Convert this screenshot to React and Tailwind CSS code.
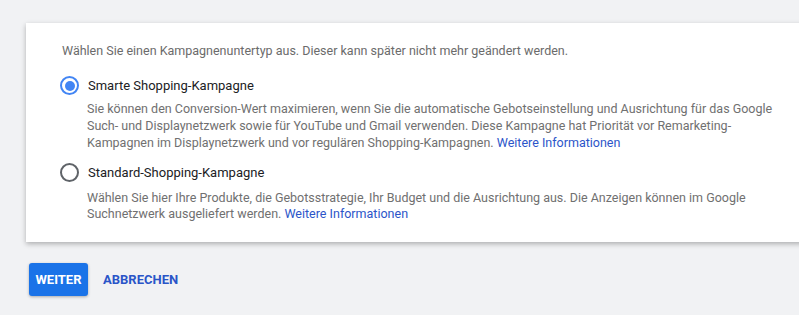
import React, { useState } from 'react';

const options = [
  {
    id: 'smart',
    label: 'Smarte Shopping-Kampagne',
    text: 'Sie können den Conversion-Wert maximieren, wenn Sie die automatische Gebotseinstellung und Ausrichtung für das Google Such- und Displaynetzwerk sowie für YouTube und Gmail verwenden. Diese Kampagne hat Priorität vor Remarketing-Kampagnen im Displaynetzwerk und vor regulären Shopping-Kampagnen.',
  },
  {
    id: 'standard',
    label: 'Standard-Shopping-Kampagne',
    text: 'Wählen Sie hier Ihre Produkte, die Gebotsstrategie, Ihr Budget und die Ausrichtung aus. Die Anzeigen können im Google Suchnetzwerk ausgeliefert werden.',
  },
];

function Radio({ checked }) {
  return (
    <span className={`flex h-[19px] w-[19px] shrink-0 items-center justify-center rounded-full border-2 ${checked ? 'border-[#4285f4]' : 'border-[#5f6368]'}`}>
      {checked && <span className="h-[10px] w-[10px] rounded-full bg-[#4285f4]" />}
    </span>
  );
}

export default function App() {
  const [selected, setSelected] = useState('smart');

  return (
    <div className="min-h-[315px] overflow-hidden bg-[#f1f2f4] pt-[23px] text-[12.5px] leading-[17px] text-[#616161]" style={{ fontFamily: 'Roboto, "Liberation Sans", sans-serif' }}>
      <section className="ml-[26px] mr-[-20px] bg-white pb-[20px] pl-[36px] pr-[40px] pt-[19px] shadow-[0_2px_5px_rgba(0,0,0,0.28)]">
        <p className="text-[#6b6b6b]">Wählen Sie einen Kampagnenuntertyp aus. Dieser kann später nicht mehr geändert werden.</p>

        <div className="mt-[17px] flex flex-col gap-[12px]">
          {options.map((o, i) => (
            <div key={o.id} className="cursor-pointer" onClick={() => setSelected(o.id)}>
              <div className="flex items-center">
                <span className="-ml-[2px] mr-[9px]"><Radio checked={selected === o.id} /></span>
                <span className="text-[13px] text-[#202124]">{o.label}</span>
              </div>
              <p className={`ml-[25px] max-w-[700px] text-[#707070] ${i === 0 ? 'mt-[5px] leading-[17px]' : 'mt-[8px] leading-[16px]'}`}>
                {o.text} <a className="text-[#2c55c9]">Weitere Informationen</a>
              </p>
            </div>
          ))}
        </div>
      </section>

      <div className="ml-[29px] mt-[21px] flex items-center gap-[15px]">
        <button className="h-[33px] w-[59px] rounded-[3px] bg-[#1a73e8] text-[13px] font-bold text-white shadow-[0_1px_3px_rgba(0,0,0,0.3)]">WEITER</button>
        <button className="text-[13px] font-bold text-[#2a55c8]">ABBRECHEN</button>
      </div>
    </div>
  );
}
